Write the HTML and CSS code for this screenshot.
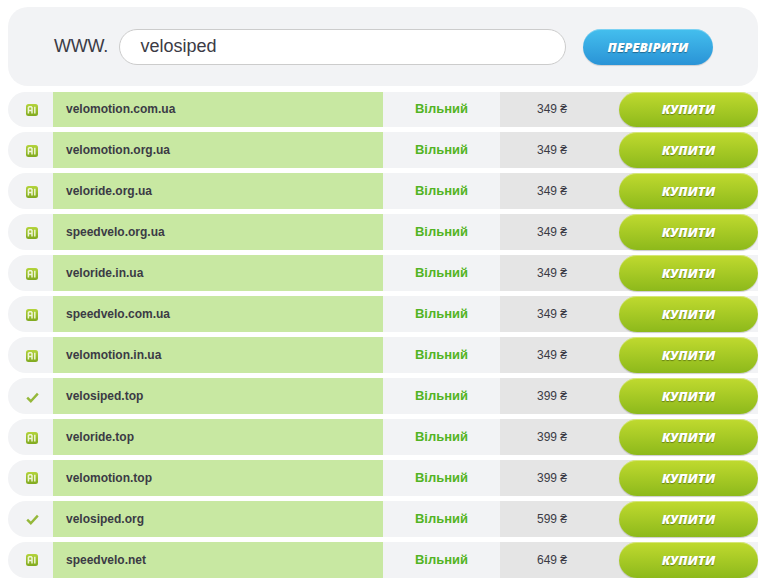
FILE: index.html
```html
<!DOCTYPE html>
<html lang="uk">
<head>
  <meta charset="UTF-8">
  <title>Домени</title>
  <link rel="stylesheet" href="styles.css">
</head>
<body>
  <svg class="icon-defs" width="0" height="0">
    <defs>
      <linearGradient id="aiGrad" x1="0" y1="0" x2="0" y2="1">
        <stop offset="0" stop-color="#b4d43c"/>
        <stop offset="1" stop-color="#80a920"/>
      </linearGradient>
      <symbol id="ai" viewBox="0 0 12 12">
        <rect width="12" height="12" rx="2.5" fill="url(#aiGrad)"/>
        <path d="M2.4 9.5V3.6l.8-.8h2l.8.8v5.9M2.4 6.6h3.6M8.8 2.8v6.7" fill="none" stroke="#eef5d6" stroke-width="1.5"/>
      </symbol>
      <symbol id="check" viewBox="0 0 13 11">
        <path d="M1.2 5.6l3.6 3.6 7-7.6" fill="none" stroke="#95b83a" stroke-width="2.4"/>
      </symbol>
    </defs>
  </svg>

  <div class="search-box">
    <span class="www">WWW.</span>
    <div class="search-input">velosiped</div>
    <button class="btn-check">ПЕРЕВІРИТИ</button>
  </div>

  <div class="domain-list">
    <div class="domain-row">
      <div class="domain-icon"><svg class="ic-ai"><use href="#ai"/></svg></div>
      <div class="domain-name">velomotion.com.ua</div>
      <div class="domain-status">Вільний</div>
      <div class="domain-price">349 ₴</div>
      <button class="btn-buy">КУПИТИ</button>
    </div>
    <div class="domain-row">
      <div class="domain-icon"><svg class="ic-ai"><use href="#ai"/></svg></div>
      <div class="domain-name">velomotion.org.ua</div>
      <div class="domain-status">Вільний</div>
      <div class="domain-price">349 ₴</div>
      <button class="btn-buy">КУПИТИ</button>
    </div>
    <div class="domain-row">
      <div class="domain-icon"><svg class="ic-ai"><use href="#ai"/></svg></div>
      <div class="domain-name">veloride.org.ua</div>
      <div class="domain-status">Вільний</div>
      <div class="domain-price">349 ₴</div>
      <button class="btn-buy">КУПИТИ</button>
    </div>
    <div class="domain-row">
      <div class="domain-icon"><svg class="ic-ai"><use href="#ai"/></svg></div>
      <div class="domain-name">speedvelo.org.ua</div>
      <div class="domain-status">Вільний</div>
      <div class="domain-price">349 ₴</div>
      <button class="btn-buy">КУПИТИ</button>
    </div>
    <div class="domain-row">
      <div class="domain-icon"><svg class="ic-ai"><use href="#ai"/></svg></div>
      <div class="domain-name">veloride.in.ua</div>
      <div class="domain-status">Вільний</div>
      <div class="domain-price">349 ₴</div>
      <button class="btn-buy">КУПИТИ</button>
    </div>
    <div class="domain-row">
      <div class="domain-icon"><svg class="ic-ai"><use href="#ai"/></svg></div>
      <div class="domain-name">speedvelo.com.ua</div>
      <div class="domain-status">Вільний</div>
      <div class="domain-price">349 ₴</div>
      <button class="btn-buy">КУПИТИ</button>
    </div>
    <div class="domain-row">
      <div class="domain-icon"><svg class="ic-ai"><use href="#ai"/></svg></div>
      <div class="domain-name">velomotion.in.ua</div>
      <div class="domain-status">Вільний</div>
      <div class="domain-price">349 ₴</div>
      <button class="btn-buy">КУПИТИ</button>
    </div>
    <div class="domain-row">
      <div class="domain-icon"><svg class="ic-check"><use href="#check"/></svg></div>
      <div class="domain-name">velosiped.top</div>
      <div class="domain-status">Вільний</div>
      <div class="domain-price">399 ₴</div>
      <button class="btn-buy">КУПИТИ</button>
    </div>
    <div class="domain-row">
      <div class="domain-icon"><svg class="ic-ai"><use href="#ai"/></svg></div>
      <div class="domain-name">veloride.top</div>
      <div class="domain-status">Вільний</div>
      <div class="domain-price">399 ₴</div>
      <button class="btn-buy">КУПИТИ</button>
    </div>
    <div class="domain-row">
      <div class="domain-icon"><svg class="ic-ai"><use href="#ai"/></svg></div>
      <div class="domain-name">velomotion.top</div>
      <div class="domain-status">Вільний</div>
      <div class="domain-price">399 ₴</div>
      <button class="btn-buy">КУПИТИ</button>
    </div>
    <div class="domain-row">
      <div class="domain-icon"><svg class="ic-check"><use href="#check"/></svg></div>
      <div class="domain-name">velosiped.org</div>
      <div class="domain-status">Вільний</div>
      <div class="domain-price">599 ₴</div>
      <button class="btn-buy">КУПИТИ</button>
    </div>
    <div class="domain-row">
      <div class="domain-icon"><svg class="ic-ai"><use href="#ai"/></svg></div>
      <div class="domain-name">speedvelo.net</div>
      <div class="domain-status">Вільний</div>
      <div class="domain-price">649 ₴</div>
      <button class="btn-buy">КУПИТИ</button>
    </div>
  </div>
</body>
</html>
```

FILE: styles.css
```css
html {
  height: 100%;
  overflow: hidden;
}

body {
  margin: 0;
  padding: 7px 7px 0 8px;
  background: #fff;
  font-family: "Liberation Sans", Arial, sans-serif;
  color: #3b3b45;
}

.icon-defs {
  position: absolute;
}

.search-box {
  display: flex;
  align-items: center;
  height: 79px;
  padding: 0 0 0 46px;
  background: #f2f3f5;
  border-radius: 20px;
  box-sizing: border-box;
}

.www {
  width: 65px;
  font-size: 18px;
  letter-spacing: -0.2px;
  margin-top: -1px;
}

.search-input {
  width: 447px;
  height: 36px;
  line-height: 33px;
  padding-left: 20.5px;
  box-sizing: border-box;
  background: #fff;
  border: 1px solid #ccc;
  border-radius: 18px;
  font-size: 18px;
}

.btn-check {
  width: 130px;
  height: 36px;
  margin-left: 17px;
  padding: 0;
  border: 0;
  border-radius: 18px;
  background: linear-gradient(#44bfee, #2a93d6);
  box-shadow: inset 0 1px 0 rgba(255, 255, 255, 0.3), 0 1px 1px rgba(0, 0, 0, 0.15);
  color: #fff;
  font: italic 800 13px "Open Sans", "Liberation Sans", sans-serif;
  text-shadow: 0 1px 1px rgba(0, 0, 0, 0.35);
}

.domain-list {
  display: flex;
  flex-direction: column;
  gap: 5.25px;
  margin-top: 5.5px;
}

.domain-row {
  display: grid;
  grid-template-columns: 45px 330px 117px 1fr 139px;
  grid-template-rows: 35.7px;
  background: #f2f3f5;
  border-radius: 18px 0 0 18px;
}

.domain-icon {
  display: flex;
  align-items: center;
  justify-content: center;
  padding: 1.4px 0 0 3px;
}

.ic-ai {
  width: 12px;
  height: 12px;
}

.ic-check {
  width: 13px;
  height: 11px;
  margin-top: 1px;
}

.domain-name {
  padding: 0.7px 0 0 13px;
  background: #c8e8a2;
  font-size: 12px;
  font-weight: bold;
  line-height: 34.7px;
}

.domain-status {
  padding-top: 0.8px;
  text-align: center;
  font-size: 13px;
  font-weight: bold;
  line-height: 33.7px;
  color: #52b423;
}

.domain-price {
  margin-right: -20px;
  padding: 0.7px 0 0 37px;
  background: #e5e5e5;
  font-size: 12px;
  line-height: 34.7px;
}

.btn-buy {
  position: relative;
  height: 100%;
  padding: 0;
  border: 0;
  border-radius: 18px;
  background: linear-gradient(#c0da2f, #8db91b);
  box-shadow: inset 0 1px 0 rgba(255, 255, 255, 0.35), 0 1px 1px rgba(0, 0, 0, 0.2);
  color: #fff;
  font: italic 800 13px "Open Sans", "Liberation Sans", sans-serif;
  text-shadow: 0 1px 1px rgba(0, 0, 0, 0.35);
}
```
